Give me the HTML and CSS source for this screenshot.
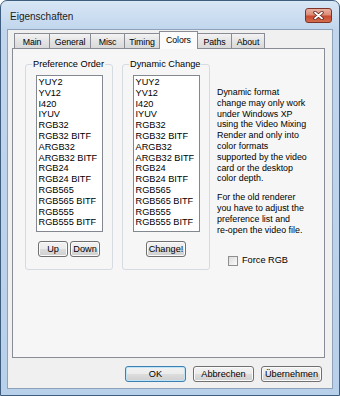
FILE: index.html
```html
<!DOCTYPE html>
<html lang="de">
<head>
    <meta charset="UTF-8">
    <title>Eigenschaften</title>
    <link rel="stylesheet" href="styles.css">
</head>
<body>
    <div class="window">
        <div class="titlebar">
            <span class="title">Eigenschaften</span>
            <div class="close">
                <svg width="11" height="9" viewBox="0 0 11 9">
                    <path d="M2 1.5 L9 7.5 M9 1.5 L2 7.5" stroke="#5a2218" stroke-width="3.4" stroke-linecap="round"/>
                    <path d="M2 1.5 L9 7.5 M9 1.5 L2 7.5" stroke="#ffffff" stroke-width="1.8" stroke-linecap="round"/>
                </svg>
            </div>
        </div>
        <div class="client">
            <div class="tabs">
                <div class="tab">Main</div>
                <div class="tab">General</div>
                <div class="tab">Misc</div>
                <div class="tab">Timing</div>
                <div class="tab active">Colors</div>
                <div class="tab">Paths</div>
                <div class="tab">About</div>
            </div>
            <div class="panel">
                <fieldset class="group">
                    <legend>Preference Order</legend>
                    <div class="listbox">
                        <div>YUY2</div>
                        <div>YV12</div>
                        <div>I420</div>
                        <div>IYUV</div>
                        <div>RGB32</div>
                        <div>RGB32 BITF</div>
                        <div>ARGB32</div>
                        <div>ARGB32 BITF</div>
                        <div>RGB24</div>
                        <div>RGB24 BITF</div>
                        <div>RGB565</div>
                        <div>RGB565 BITF</div>
                        <div>RGB555</div>
                        <div>RGB555 BITF</div>
                    </div>
                    <div class="btnrow">
                        <button class="btn small">Up</button>
                        <button class="btn small">Down</button>
                    </div>
                </fieldset>
                <fieldset class="group">
                    <legend>Dynamic Change</legend>
                    <div class="listbox">
                        <div>YUY2</div>
                        <div>YV12</div>
                        <div>I420</div>
                        <div>IYUV</div>
                        <div>RGB32</div>
                        <div>RGB32 BITF</div>
                        <div>ARGB32</div>
                        <div>ARGB32 BITF</div>
                        <div>RGB24</div>
                        <div>RGB24 BITF</div>
                        <div>RGB565</div>
                        <div>RGB565 BITF</div>
                        <div>RGB555</div>
                        <div>RGB555 BITF</div>
                    </div>
                    <div class="btnrow">
                        <button class="btn change">Change!</button>
                    </div>
                </fieldset>
                <div class="info">
                    <p>Dynamic format<br>change may only work<br>under Windows XP<br>using the Video Mixing<br>Render and only into<br>color formats<br>supported by the video<br>card or the desktop<br>color depth.</p>
                    <p class="second">For the old renderer<br>you have to adjust the<br>preference list and<br>re-open the video file.</p>
                    <label class="check"><span class="box"></span>Force RGB</label>
                </div>
            </div>
            <div class="footer">
                <button class="btn wide default">OK</button>
                <button class="btn wide">Abbrechen</button>
                <button class="btn wide">Übernehmen</button>
            </div>
        </div>
    </div>
</body>
</html>
```

FILE: styles.css
```css
body {
    margin: 0;
    background-color: #ffffff;
    font-family: "Liberation Sans", Arial, sans-serif;
    color: #000000;
}
.window {
    width: 340px;
    height: 396px;
    box-sizing: border-box;
    border: 1px solid #3f5d7e;
    border-radius: 7px 7px 0 0;
    background: linear-gradient(#d8e6f5 0px, #c1d6ed 28px, #b9d0ea 100%);
    padding: 0 6px 6px;
    display: flex;
    flex-direction: column;
}
.titlebar {
    height: 28px;
    display: flex;
    justify-content: space-between;
}
.title {
    font-size: 10px;
    margin: 10px 0 0 3px;
    color: #1c1c1c;
}
.close {
    width: 27px;
    height: 15px;
    box-sizing: border-box;
    margin: 7px 1px 0 0;
    border: 1px solid #7c3326;
    border-radius: 3px;
    background: linear-gradient(#eab1a3 0%, #dd8a74 45%, #c84a31 55%, #d46d4d 100%);
    display: flex;
    align-items: center;
    justify-content: center;
}
.client {
    flex: 1;
    border: 1px solid #8ea3ba;
    background-color: #f0f0f0;
    padding: 0 7px 0 4px;
    display: flex;
    flex-direction: column;
}
.tabs {
    height: 19px;
    display: flex;
    align-items: flex-end;
    padding-left: 2px;
}
.tab {
    height: 16px;
    box-sizing: border-box;
    border: 1px solid #898c95;
    border-bottom: none;
    margin-right: -1px;
    padding-top: 3px;
    text-align: center;
    font-size: 8.8px;
    letter-spacing: -0.1px;
    background: linear-gradient(#f3f3f3, #e3e3e3 50%, #d8d8d8);
}
.tab:nth-child(1) { width: 36px; }
.tab:nth-child(2) { width: 42px; }
.tab:nth-child(3) { width: 35px; }
.tab:nth-child(4) { width: 36px; }
.tab:nth-child(5) { width: 39px; }
.tab:nth-child(6) { width: 35px; }
.tab:nth-child(7) { width: 34px; }
.tab.active {
    height: 18px;
    padding-top: 3px;
    background: #fbfbfb;
    position: relative;
    z-index: 1;
}
.panel {
    height: 310px;
    box-sizing: border-box;
    margin-top: -1px;
    border: 1px solid #898c95;
    background-color: #f6f6f6;
    padding: 10px 0 0 12px;
    display: flex;
    align-items: flex-start;
    font-size: 9.2px;
}
.group {
    width: 88px;
    box-sizing: border-box;
    margin: 0 9px 0 0;
    padding: 5px 0 12px;
    border: 1px solid #d5dbe0;
    border-radius: 3px;
    min-width: 0;
}
.group legend {
    margin-left: 6px;
    padding: 0 1px;
    line-height: 11px;
}
.listbox {
    width: 67px;
    height: 157px;
    box-sizing: border-box;
    margin: 0 auto;
    border: 1px solid #828790;
    background-color: #ffffff;
    padding: 1px 2px;
    line-height: 10.8px;
    white-space: nowrap;
}
.btnrow {
    display: flex;
    justify-content: center;
    gap: 2px;
    margin-top: 9px;
}
.btn {
    height: 16px;
    box-sizing: border-box;
    padding: 0;
    border: 1px solid #707070;
    border-radius: 3px;
    background: linear-gradient(#f2f2f2 0%, #ebebeb 50%, #dddddd 50%, #cfcfcf 100%);
    box-shadow: inset 0 0 0 1px #fafafa;
    font-family: "Liberation Sans", Arial, sans-serif;
    font-size: 9.2px;
    color: #000000;
}
.btn.small {
    width: 30px;
}
.btn.change {
    width: 40px;
}
.info {
    margin: 28px 0 0 -2px;
    font-size: 8.9px;
    line-height: 10.8px;
    white-space: nowrap;
}
.info p {
    margin: 0;
}
.info p.second {
    margin-top: 8px;
}
.check {
    display: flex;
    align-items: center;
    gap: 4px;
    margin: 20px 0 0 11px;
    font-size: 9.2px;
}
.box {
    width: 10px;
    height: 10px;
    box-sizing: border-box;
    border: 1px solid #8e8f8f;
    background: linear-gradient(135deg, #dcdcdc, #fbfbfb);
}
.footer {
    display: flex;
    justify-content: flex-end;
    gap: 7px;
    padding: 8px 3px 0 0;
}
.btn.wide {
    width: 61px;
}
.btn.default {
    border-color: #3c7fb1;
    box-shadow: inset 0 0 0 1px #bfe4f7;
}
```
